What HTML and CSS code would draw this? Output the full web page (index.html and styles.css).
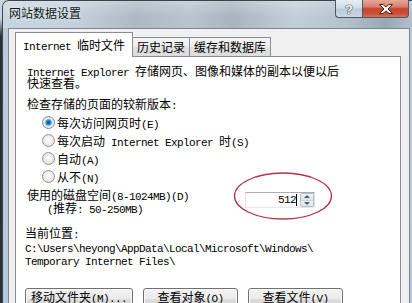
FILE: index.html
```html
<!DOCTYPE html>
<html lang="zh-CN">
<head>
<meta charset="utf-8">
<title>网站数据设置</title>
<link rel="stylesheet" href="styles.css">
</head>
<body>
<div class="window">
  <div class="titlebar">
    <div class="title">网站数据设置</div>
    <div class="caption">
      <div class="cbtn help">?</div>
      <div class="cbtn close">
        <svg class="xicon" width="14" height="10" viewBox="0 0 14 10"><path d="M0.5,0.5 H4 L7,3 L10,0.5 H13.5 L9,5 L13.5,9.5 H10 L7,7 L4,9.5 H0.5 L5,5 Z" fill="#ffffff" stroke="#4a2620" stroke-width="1"/></svg>
      </div>
    </div>
  </div>
  <div class="client">
    <div class="tabs">
      <div class="tab active"><span class="en">Internet </span>临时文件</div>
      <div class="tab t2">历史记录</div>
      <div class="tab t3">缓存和数据库</div>
    </div>
    <div class="panel">
      <p class="intro"><span class="en">Internet Explorer </span>存储网页、图像和媒体的副本以便以后<br>快速查看。</p>
      <p class="label">检查存储的页面的较新版本<span class="en">:</span></p>
      <ul class="radios">
        <li class="opt"><span class="radio checked"></span><span class="txt">每次访问网页时<span class="en">(E)</span></span></li>
        <li class="opt"><span class="radio"></span><span class="txt">每次启动<span class="en"> Internet Explorer </span>时<span class="en">(S)</span></span></li>
        <li class="opt"><span class="radio"></span><span class="txt">自动<span class="en">(A)</span></span></li>
        <li class="opt"><span class="radio"></span><span class="txt">从不<span class="en">(N)</span></span></li>
      </ul>
      <div class="disk">
        <div class="disk-text">
          <div>使用的磁盘空间<span class="en">(8-1024MB)(D)</span></div>
          <div class="hint"><span class="en">(</span>推荐<span class="en">: 50-250MB)</span></div>
        </div>
        <div class="spin">
          <div class="spin-field"><span class="num">512</span><span class="caret"></span></div>
          <div class="spin-btns">
            <div class="sb up"><span class="tri-up"></span></div>
            <div class="sb down"><span class="tri-down"></span></div>
          </div>
          <svg class="ring" width="100" height="50" viewBox="0 0 100 50"><ellipse cx="50" cy="25" rx="48.5" ry="23" fill="none" stroke="#b3344a" stroke-width="1.3"/></svg>
        </div>
      </div>
      <div class="location">
        <div>当前位置<span class="en">:</span></div>
        <div class="path">C:\Users\heyong\AppData\Local\Microsoft\Windows\<br>Temporary Internet Files\</div>
      </div>
      <div class="buttons">
        <button class="btn wide"><span class="txt">移动文件夹<span class="en">(M)...</span></span></button>
        <button class="btn"><span class="txt">查看对象<span class="en">(O)</span></span></button>
        <button class="btn"><span class="txt">查看文件<span class="en">(V)</span></span></button>
      </div>
    </div>
  </div>
</div>
</body>
</html>
```

FILE: styles.css
```css
* { box-sizing: border-box; }
html, body { margin: 0; padding: 0; }
body {
  width: 412px;
  height: 303px;
  overflow: hidden;
  background: linear-gradient(to bottom, #cdd5dd 0, #cdd5dd 18px, #2c3036 36px, #2c3036 100%);
  font-family: "Noto Sans CJK SC", sans-serif;
  font-size: 12px;
  line-height: 13px;
  color: #000;
}
.en {
  font-family: "Liberation Mono", monospace;
  font-size: 11px;
  letter-spacing: -0.6px;
  line-height: 0;
}
.window {
  margin-left: 2px;
  width: 418px;
  height: 330px;
  border: 1px solid #3a444e;
  border-bottom: none;
  border-radius: 7px 7px 0 0;
  background: linear-gradient(to bottom, #bccbd9 0, #b9cad9 60%, #b3c8da 100%);
}
.titlebar {
  display: flex;
  height: 27px;
  border-radius: 6px 6px 0 0;
  background:
    linear-gradient(to bottom, rgba(255,255,255,0.25), rgba(255,255,255,0) 60%),
    linear-gradient(to right, #c9d5e0 0%, #c3cfdb 18%, #aeb9c4 32%, #b9c4cf 45%, #a9b4bf 55%, #c2ceda 70%, #b5c1cd 82%, #9aa7b5 92%, #b8c6d4 100%);
}
.title {
  padding: 4px 0 0 6px;
  line-height: 16px;
  color: #121820;
  text-shadow: 0 0 4px rgba(255,255,255,0.8);
}
.caption {
  display: flex;
  margin: -1px 10px 0 auto;
  height: 18px;
}
.cbtn {
  height: 18px;
  border: 1px solid #4c5866;
  border-top: none;
  display: flex;
  align-items: center;
  justify-content: center;
}
.help {
  width: 27px;
  border-right: none;
  border-radius: 0 0 0 4px;
  background: linear-gradient(to bottom, #e6edf4 0%, #d3dde7 48%, #bccad8 52%, #cbd7e3 100%);
  font-family: "Liberation Sans", sans-serif;
  font-size: 13px;
  font-weight: bold;
  color: #f4f6f8;
  text-shadow: 0 0 1px #3c4652, 0 0 1px #3c4652, 0 0 1px #3c4652;
  padding-top: 1px;
}
.close {
  width: 47px;
  border-radius: 0 0 4px 0;
  background: linear-gradient(to bottom, #e7a999 0%, #d97d69 40%, #c7452d 52%, #c9503a 80%, #d9735c 100%);
}
.xicon { display: block; }
.client {
  margin-left: 5px;
  width: 402px;
  height: 302px;
  border: 1px solid #7a8692;
  background: #f0f0f0;
  padding: 3px 0 0 6px;
}
.tabs {
  display: flex;
  align-items: flex-end;
  height: 25px;
  margin-bottom: -1px;
  position: relative;
  z-index: 1;
}
.tab {
  height: 19px;
  margin-bottom: 1px;
  border: 1px solid #898c95;
  border-bottom: none;
  border-left: none;
  background: linear-gradient(to bottom, #f6f6f6 0%, #ececec 50%, #e2e2e2 51%, #dcdcdc 100%);
  padding-top: 2px;
  text-align: center;
  white-space: nowrap;
}
.tab.active {
  width: 118px;
  height: 25px;
  margin-bottom: 0;
  border-left: 1px solid #898c95;
  background: #fff;
  padding-top: 5px;
}
.t2 { width: 57px; }
.t3 { width: 81px; }
.panel {
  width: 386px;
  height: 270px;
  border: 1px solid #898c95;
  background: #fff;
  padding: 8px 0 0 11px;
}
.intro {
  margin: 0;
  line-height: 12px;
}
.label {
  margin: 8px 0 0 0;
}
.radios {
  list-style: none;
  margin: 3px 0 0 0;
  padding: 0 0 0 15px;
}
.opt {
  height: 18px;
  display: flex;
  align-items: center;
}
.txt {
  display: block;
  line-height: 13px;
  white-space: pre;
}
.radio {
  flex: none;
  width: 13px;
  height: 13px;
  margin: 1px 2px 0 0;
  border-radius: 50%;
  border: 1px solid #949494;
  background: radial-gradient(circle at 50% 45%, #fbfbfb 0, #eeeeee 45%, #d6d6d6 100%);
}
.radio.checked {
  border-color: #7a8c9c;
  background: radial-gradient(circle at 50% 50%, #134f87 0, #1f6fb5 1.6px, #55a6e3 2.8px, #a9d5f3 3.6px, #f4f4f4 4.3px, #e6e6e6 70%, #d2d2d2 100%);
}
.disk {
  display: flex;
  margin-top: 3px;
}
.disk-text {
  width: 218px;
  flex: none;
}
.hint { padding-left: 20px; }
.spin {
  position: relative;
  margin-top: 4px;
  width: 70px;
  height: 16px;
  display: flex;
  border: 1px solid;
  border-color: #abadb3 #dbdfe6 #e3e9ef #e2e3ea;
  background: #fff;
}
.spin-field {
  width: 54px;
  display: flex;
  align-items: center;
  justify-content: flex-end;
  padding-right: 3px;
}
.num {
  display: block;
  font-family: "Liberation Mono", monospace;
  font-size: 11px;
  letter-spacing: -0.6px;
  line-height: 14px;
}
.caret {
  display: block;
  width: 1px;
  height: 12px;
  background: #000;
}
.spin-btns {
  width: 14px;
  display: flex;
  flex-direction: column;
}
.sb {
  flex: 1;
  border: 1px solid #b5bfca;
  background: linear-gradient(to bottom, #f3f5f8, #dde3ea);
  display: flex;
  align-items: center;
  justify-content: center;
}
.sb.up { border-bottom-color: #c9d0d8; border-radius: 2px 2px 0 0; }
.sb.down { border-top: none; border-radius: 0 0 2px 2px; }
.tri-up {
  width: 0; height: 0;
  border-left: 3px solid transparent;
  border-right: 3px solid transparent;
  border-bottom: 3px solid #4f5b68;
}
.tri-down {
  width: 0; height: 0;
  border-left: 3px solid transparent;
  border-right: 3px solid transparent;
  border-top: 3px solid #4f5b68;
}
.ring {
  position: absolute;
  left: -13px;
  top: -22px;
  pointer-events: none;
}
.location {
  margin: 12px 0 0 -2px;
}
.path {
  margin-top: 4px;
  font-family: "Liberation Mono", monospace;
  font-size: 11px;
  letter-spacing: -0.6px;
  line-height: 13px;
  white-space: nowrap;
}
.buttons {
  display: flex;
  gap: 10px;
  margin: 19px 0 0 -2px;
}
.btn {
  width: 95px;
  height: 22px;
  padding: 1px 0 0 0;
  border: 1px solid #707070;
  border-radius: 3px;
  box-shadow: inset 0 0 0 1px #fbfbfb;
  background: linear-gradient(to bottom, #f2f2f2 0%, #ebebeb 48%, #dddddd 52%, #cfcfcf 100%);
  font-family: "Noto Sans CJK SC", sans-serif;
  font-size: 12px;
  line-height: 13px;
  color: #000;
  display: flex;
  justify-content: center;
  align-items: flex-start;
}
.btn.wide { width: 108px; }
```
